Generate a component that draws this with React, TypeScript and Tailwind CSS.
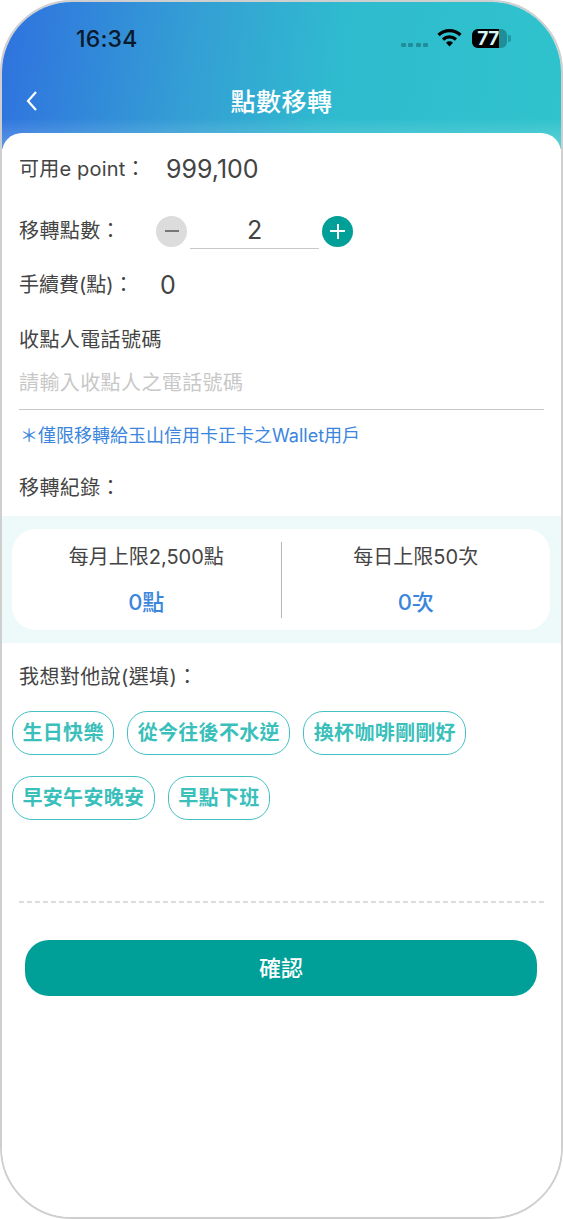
import React from 'react';

const StatusBar: React.FC = () => (
  <div className="flex h-[76px] items-start justify-between pl-[74px] pr-[50px] pt-[22px]">
    <span className="text-[23px] leading-[30px] font-medium tracking-[0.2px] text-[#0b1a2a]">16:34</span>
    <div className="flex items-start pt-[5px]">
      <div className="mt-[14px] mr-[9px] flex gap-[2.3px]">
        <span className="h-[4px] w-[5px] rounded-[1px] bg-[#1f8e98]" />
        <span className="h-[4px] w-[5px] rounded-[1px] bg-[#1f8e98]" />
        <span className="h-[4px] w-[5px] rounded-[1px] bg-[#1f8e98]" />
        <span className="h-[4px] w-[5px] rounded-[1px] bg-[#1f8e98]" />
      </div>
      <svg width="25" height="19" viewBox="0 0 25 19" className="mr-[10px] -mt-[1px]">
        <path d="M1.5 7 A16 16 0 0 1 23.5 7" fill="none" stroke="#000" strokeWidth="3.2" />
        <path d="M6 11.5 A9.5 9.5 0 0 1 19 11.5" fill="none" stroke="#000" strokeWidth="3.2" />
        <path d="M9 14.8 L12.5 18.6 L16 14.8 A5 5 0 0 0 9 14.8 Z" fill="#000" />
      </svg>
      <div className="flex h-[19px] w-[35px] items-center rounded-[6px] bg-[#1f8e98]">
        <div className="flex h-full w-[27px] items-center justify-end rounded-l-[6px] bg-black text-[19px] leading-[19px] font-bold tracking-[-0.3px] text-[#d8f4f4]">
          77
        </div>
      </div>
      <span className="mt-[6px] ml-[1px] h-[7px] w-[3px] rounded-r-[2px] bg-[#1f9aa3]" />
    </div>
  </div>
);

const Chip: React.FC<{ label: string }> = ({ label }) => (
  <button className="flex h-[44px] items-center rounded-[20px] border-[1.5px] border-[#45c0c4] bg-white px-[9.5px] text-[20px] leading-none font-semibold tracking-[0.3px] text-[#3bbfbb]">
    {label}
  </button>
);

export default function App() {
  return (
    <div
      className="h-[1219px] w-[563px] overflow-hidden bg-white"
      style={{ fontFamily: 'Inter, "Noto Sans CJK TC", sans-serif' }}
    >
      <div className="relative flex h-full flex-col overflow-hidden rounded-[72px] border-2 border-[#cfcfcf] bg-white">
        {/* header */}
        <div className="h-[147px] shrink-0 bg-[linear-gradient(180deg,rgba(255,255,255,0)_79%,rgba(255,255,255,0.25)_100%),linear-gradient(97deg,#2f72df_0%,#34a0d4_35%,#2fbbcf_60%,#2fc3cc_100%)]">
          <StatusBar />
          <div className="relative flex h-[48px] items-center justify-center">
            <svg width="14" height="22" viewBox="0 0 14 22" className="absolute left-[23px] top-[12px]">
              <path d="M11 2 L3 11 L11 20" fill="none" stroke="#fff" strokeWidth="2.2" />
            </svg>
            <h1 className="text-[25px] leading-none font-medium tracking-[0.5px] text-white">點數移轉</h1>
          </div>
        </div>

        {/* body */}
        <div className="-mt-[16px] flex-1 overflow-hidden rounded-t-[20px] bg-white">
          <div className="px-[17px]">
            <div className="flex h-[70px] items-center pt-[2px]">
              <span className="w-[147px] text-[20px] leading-none tracking-[0.2px] text-[#444]">可用e point：</span>
              <span className="text-[25px] leading-none text-[#444]">999,100</span>
            </div>
            <div className="flex h-[56px] items-center">
              <span className="w-[137px] text-[20px] leading-none tracking-[0.4px] text-[#444]">移轉點數：</span>
              <button className="flex h-[31px] w-[31px] items-center justify-center rounded-full bg-[#dcdcdc]">
                <span className="h-[2.5px] w-[14px] bg-[#777]" />
              </button>
              <div className="mx-[3px] flex h-[36px] w-[129px] items-center justify-center border-b border-[#c8c8c8] text-[25px] leading-none text-[#444]">
                2
              </div>
              <button className="relative flex h-[31px] w-[31px] items-center justify-center rounded-full bg-[#009f97]">
                <span className="h-[2px] w-[15px] bg-white" />
                <span className="absolute h-[15px] w-[2px] bg-white" />
              </button>
            </div>
            <div className="flex h-[52px] items-center">
              <span className="w-[141px] text-[20px] leading-none text-[#444]">手續費(點)：</span>
              <span className="text-[25px] leading-none text-[#444]">0</span>
            </div>
            <div className="flex h-[58px] items-center">
              <span className="text-[20px] leading-none tracking-[0.4px] text-[#444]">收點人電話號碼</span>
            </div>
            <div className="h-[41px] border-b border-[#c8c8c8]">
              <span className="text-[20px] leading-[28px] tracking-[0.4px] text-[#c8c8c8]">請輸入收點人之電話號碼</span>
            </div>
            <div className="flex h-[51px] items-center">
              <span className="pl-[1px] text-[18px] leading-none text-[#3b86dc]">＊僅限移轉給玉山信用卡正卡之Wallet用戶</span>
            </div>
            <div className="flex h-[54px] items-center">
              <span className="text-[20px] leading-none tracking-[0.4px] text-[#444]">移轉紀錄：</span>
            </div>
          </div>

          {/* limits */}
          <div className="mt-[1px] bg-[#eefaf9] pt-[13px] pr-[11px] pb-[13px] pl-[10px]">
            <div className="flex h-[101px] items-center rounded-[24px] bg-white">
              <div className="flex flex-1 flex-col items-center gap-[24px]">
                <span className="text-[20px] leading-none text-[#444]">每月上限2,500點</span>
                <span className="text-[22px] leading-none font-medium text-[#3b86dc]">0點</span>
              </div>
              <div className="h-[76px] w-px bg-[#b5b5b5]" />
              <div className="flex flex-1 flex-col items-center gap-[24px]">
                <span className="text-[20px] leading-none text-[#444]">每日上限50次</span>
                <span className="text-[22px] leading-none font-medium text-[#3b86dc]">0次</span>
              </div>
            </div>
          </div>

          <div className="flex h-[68px] items-center px-[17px]">
            <span className="text-[20px] leading-none tracking-[0.4px] text-[#444]">我想對他說(選填)：</span>
          </div>

          <div className="flex flex-wrap gap-x-[13px] gap-y-[21px] pr-[90px] pl-[10px]">
            <Chip label="生日快樂" />
            <Chip label="從今往後不水逆" />
            <Chip label="換杯咖啡剛剛好" />
            <Chip label="早安午安晚安" />
            <Chip label="早點下班" />
          </div>

          <div className="mx-[17px] mt-[81px] h-[2px] bg-[repeating-linear-gradient(90deg,#dcdcdc_0,#dcdcdc_5px,transparent_5px,transparent_8px)]" />

          <div className="pt-[37px] pr-[24px] pl-[23px]">
            <button className="h-[56px] w-full rounded-[24px] bg-[#009f97] text-[22px] font-medium text-white">
              確認
            </button>
          </div>
        </div>
      </div>
    </div>
  );
}
